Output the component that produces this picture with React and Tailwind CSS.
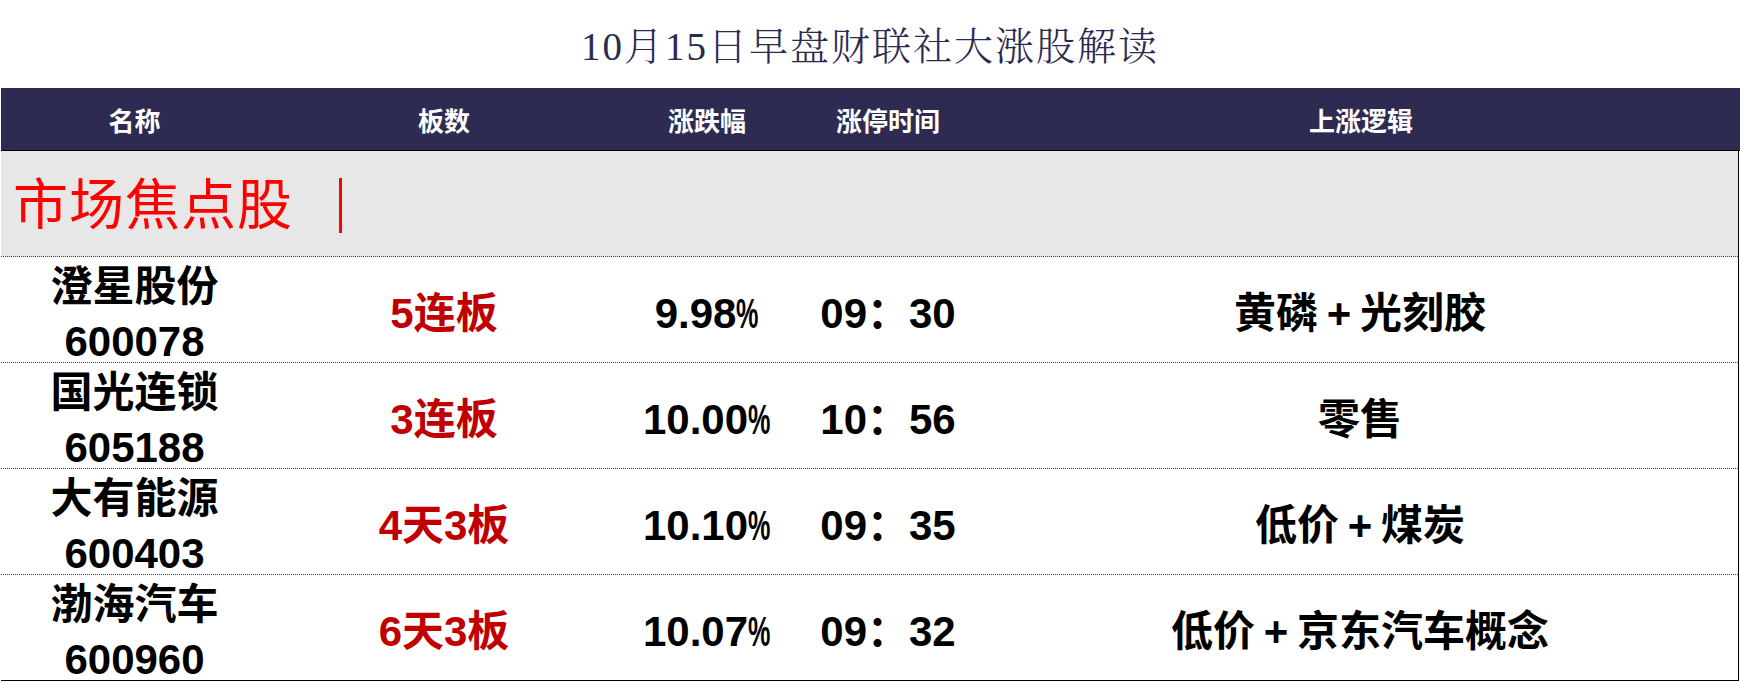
import React from "react";

const rows = [
  { name: "澄星股份", code: "600078", boards: "5连板", pct: "9.98", time: "09：30", logic: "黄磷+光刻胶" },
  { name: "国光连锁", code: "605188", boards: "3连板", pct: "10.00", time: "10：56", logic: "零售" },
  { name: "大有能源", code: "600403", boards: "4天3板", pct: "10.10", time: "09：35", logic: "低价+煤炭" },
  { name: "渤海汽车", code: "600960", boards: "6天3板", pct: "10.07", time: "09：32", logic: "低价+京东汽车概念" },
];

const cols = "grid grid-cols-[267px_352px_174px_188px_1fr]";
const sans = "font-['Liberation_Sans','Noto_Sans_CJK_SC',sans-serif]";

// the sheet's font draws "+" about as wide as a CJK glyph
const Logic = ({ text }) => {
  const parts = text.split("+");
  return (
    <span>
      {parts.map((p, i) => (
        <React.Fragment key={i}>
          {i > 0 && <span className="inline-block w-[42px] text-center">+</span>}
          {p}
        </React.Fragment>
      ))}
    </span>
  );
};

export default function App() {
  return (
    <div className="w-[1740px] h-[682px] bg-white overflow-hidden">
      <div className="h-[88px] flex items-center justify-center pt-[6px]">
        <h1 className="font-['Liberation_Serif','Noto_Serif_CJK_SC','Noto_Sans_CJK_SC',serif] text-[39px] font-light text-[#2b2a50] tracking-[2px]">
          10月15日早盘财联社大涨股解读
        </h1>
      </div>

      <div className="pl-[1px]">
        {/* header */}
        <div className={`${cols} h-[63px] bg-[#2d2b52] border-b border-black text-white text-[26px] font-bold font-['Noto_Sans_CJK_SC',sans-serif]`}>
          {["名称", "板数", "涨跌幅", "涨停时间", "上涨逻辑"].map((h) => (
            <div key={h} className="flex items-center justify-center pt-[1px]">
              {h}
            </div>
          ))}
        </div>

        <div className="w-[1738px] border-r border-black">
          {/* section label */}
          <div className="h-[106px] bg-[#e7e7e7] border-b border-dotted border-[#444] flex items-center pl-[12px] pt-[4px]">
            <span className="font-['Liberation_Serif','Noto_Sans_CJK_SC',serif] text-[55px] leading-none text-[#ff0000] tracking-[1px]">
              市场焦点股
            </span>
            <span className="ml-[46px] inline-block w-[3px] h-[55px] bg-[#ff0000]" aria-hidden="true" />
          </div>

          {rows.map((r, i) => (
            <div
              key={r.code}
              className={`${cols} h-[106px] border-b ${
                i === rows.length - 1 ? "border-solid border-black" : "border-dotted border-[#444]"
              } ${sans} font-bold text-[42px] text-black`}
            >
              <div className="flex flex-col items-center justify-center leading-[55px] pt-[2px]">
                <span>{r.name}</span>
                <span>{r.code}</span>
              </div>
              <div className="flex items-center justify-center text-[#c00000]">{r.boards}</div>
              <div className="flex items-center justify-center">
                <span>
                  {r.pct}
                  <span className="inline-block w-[23px] origin-left scale-x-[0.6]">%</span>
                </span>
              </div>
              <div className="flex items-center justify-center">{r.time}</div>
              <div className="flex items-center justify-center">
                <Logic text={r.logic} />
              </div>
            </div>
          ))}
        </div>
      </div>
    </div>
  );
}
